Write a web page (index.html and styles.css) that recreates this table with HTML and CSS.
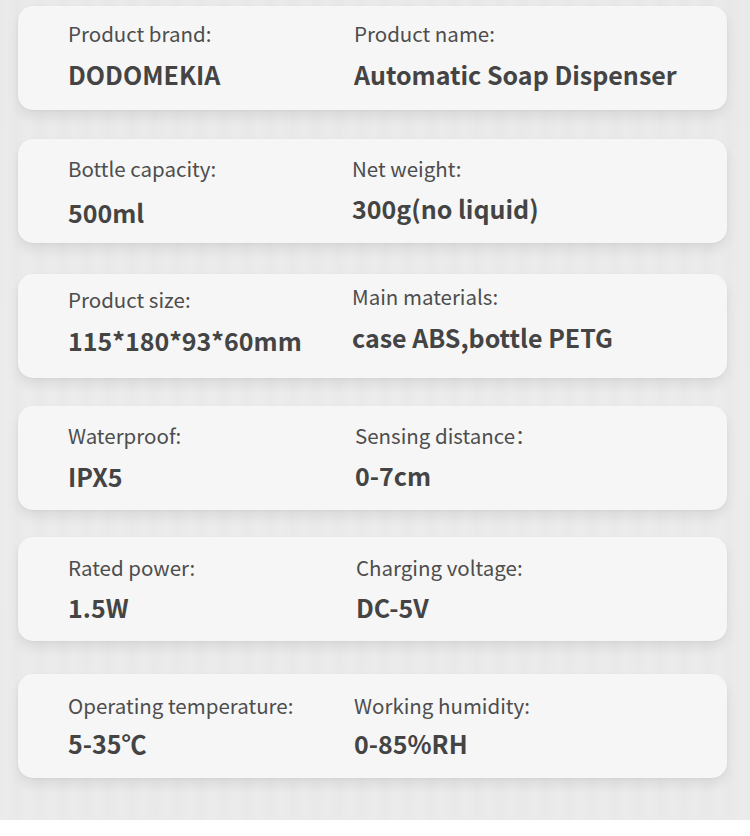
FILE: index.html
```html
<!DOCTYPE html>
<html lang="en">
<head>
<meta charset="utf-8">
<title>Specifications</title>
<link rel="stylesheet" href="styles.css">
</head>
<body>
<main class="page">
  <section class="card c1">
    <div class="cell"><div class="label">Product brand:</div><div class="value">DODOMEKIA</div></div>
    <div class="cell right"><div class="label">Product name:</div><div class="value">Automatic Soap Dispenser</div></div>
  </section>
  <section class="card c2">
    <div class="cell"><div class="label">Bottle capacity:</div><div class="value">500ml</div></div>
    <div class="cell right"><div class="label">Net weight:</div><div class="value">300g(no liquid)</div></div>
  </section>
  <section class="card c3">
    <div class="cell"><div class="label">Product size:</div><div class="value">115*180*93*60mm</div></div>
    <div class="cell right"><div class="label">Main materials:</div><div class="value">case ABS,bottle PETG</div></div>
  </section>
  <section class="card c4">
    <div class="cell"><div class="label">Waterproof:</div><div class="value">IPX5</div></div>
    <div class="cell right"><div class="label">Sensing distance：</div><div class="value">0-7cm</div></div>
  </section>
  <section class="card c5">
    <div class="cell"><div class="label">Rated power:</div><div class="value">1.5W</div></div>
    <div class="cell right"><div class="label">Charging voltage:</div><div class="value">DC-5V</div></div>
  </section>
  <section class="card c6">
    <div class="cell"><div class="label">Operating temperature:</div><div class="value">5-35℃</div></div>
    <div class="cell right"><div class="label">Working humidity:</div><div class="value">0-85%RH</div></div>
  </section>
</main>
</body>
</html>
```
FILE: styles.css
```css
html, body {
  margin: 0;
  padding: 0;
  background: #ffffff;
}
body {
  width: 750px;
  height: 836px;
  overflow: hidden;
  font-family: "Noto Sans CJK SC", "Noto Sans", sans-serif;
}
.page {
  height: 820px;
  box-sizing: border-box;
  padding-top: 6px;
  display: flex;
  flex-direction: column;
  background:
    repeating-linear-gradient(90deg, rgba(255,255,255,0) 0px, rgba(255,255,255,0.07) 5px, rgba(255,255,255,0) 11px, rgba(0,0,0,0.006) 17px, rgba(255,255,255,0) 23px),
    linear-gradient(180deg, #e9e9e9 0%, #ebebeb 50%, #eaeaea 100%);
}
.card {
  margin: 0 23px 0 18px;
  height: 104px;
  box-sizing: border-box;
  border-radius: 15px;
  background: #f6f6f6;
  box-shadow: 0 7px 12px rgba(0, 0, 0, 0.07), 0 1px 3px rgba(0, 0, 0, 0.04);
  display: grid;
  grid-template-columns: 286px 1fr;
  padding-left: 50px;
  color: #474747;
}
.cell {
  display: flex;
  flex-direction: column;
}
.label {
  font-size: 20.5px;
  line-height: 24px;
  font-weight: 400;
  color: #4d4d4d;
}
.value {
  font-size: 25px;
  line-height: 30px;
  font-weight: 700;
  color: #444444;
  white-space: nowrap;
}
.c1 { padding-top: 15px; }
.c1 .value { margin-top: 14px; }
.c2 { margin-top: 29px; padding-top: 17px; }
.c2 .value { margin-top: 17px; }
.c2 .right .value { margin-top: 13px; }
.c3 { margin-top: 31px; padding-top: 13px; }
.c3 .value { margin-top: 14px; }
.c3 .right { margin-top: -3px; }
.c4 { margin-top: 28px; padding-top: 17px; }
.c4 .value { margin-top: 14px; }
.c4 .right .value { margin-top: 13px; }
.c5 { margin-top: 27px; padding-top: 18px; }
.c5 .value { margin-top: 13px; }
.c6 { margin-top: 33px; padding-top: 19px; }
.c6 .value { margin-top: 11px; }
.c5 .right { padding-left: 2px; }
.c4 .right { padding-left: 1px; }
.c2 .right, .c3 .right { margin-left: -2px; }
```
